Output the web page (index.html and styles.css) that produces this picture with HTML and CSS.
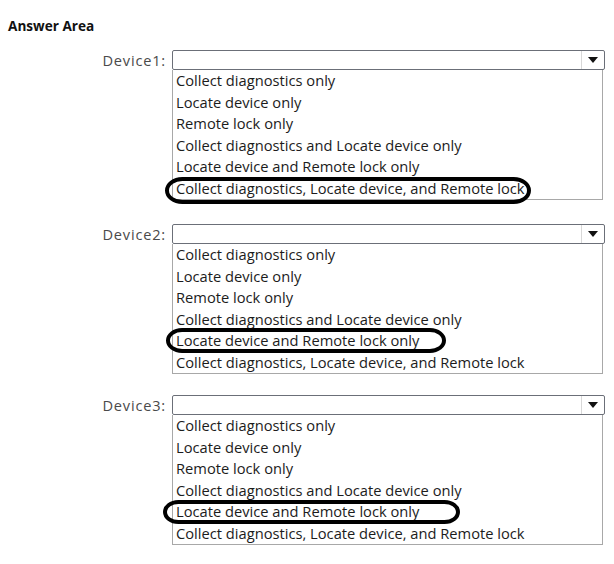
FILE: index.html
```html
<!DOCTYPE html>
<html>
<head>
<meta charset="utf-8">
<link rel="stylesheet" href="styles.css">
</head>
<body>
<div class="page">
  <h1 class="title">Answer Area</h1>

  <div class="device device-first">
    <div class="label">Device1:</div>
    <div class="control">
      <div class="select"><span class="arrow"><svg width="10" height="6" viewBox="0 0 10 6"><path d="M0 0H10L5 6Z" fill="#111"/></svg></span></div>
      <ul class="list">
        <li>Collect diagnostics only</li>
        <li>Locate device only</li>
        <li>Remote lock only</li>
        <li>Collect diagnostics and Locate device only</li>
        <li>Locate device and Remote lock only</li>
        <li class="picked"><span class="ring ring1"></span>Collect diagnostics, Locate device, and Remote lock</li>
      </ul>
    </div>
  </div>

  <div class="device">
    <div class="label">Device2:</div>
    <div class="control">
      <div class="select"><span class="arrow"><svg width="10" height="6" viewBox="0 0 10 6"><path d="M0 0H10L5 6Z" fill="#111"/></svg></span></div>
      <ul class="list">
        <li>Collect diagnostics only</li>
        <li>Locate device only</li>
        <li>Remote lock only</li>
        <li>Collect diagnostics and Locate device only</li>
        <li class="picked"><span class="ring ring2"></span>Locate device and Remote lock only</li>
        <li>Collect diagnostics, Locate device, and Remote lock</li>
      </ul>
    </div>
  </div>

  <div class="device">
    <div class="label">Device3:</div>
    <div class="control">
      <div class="select"><span class="arrow"><svg width="10" height="6" viewBox="0 0 10 6"><path d="M0 0H10L5 6Z" fill="#111"/></svg></span></div>
      <ul class="list">
        <li>Collect diagnostics only</li>
        <li>Locate device only</li>
        <li>Remote lock only</li>
        <li>Collect diagnostics and Locate device only</li>
        <li class="picked"><span class="ring ring3"></span>Locate device and Remote lock only</li>
        <li>Collect diagnostics, Locate device, and Remote lock</li>
      </ul>
    </div>
  </div>
</div>
</body>
</html>
```

FILE: styles.css
```css
html, body {
  margin: 0;
  padding: 0;
  background: #ffffff;
}

.page {
  padding: 17px 0 0 8px;
  font-family: "Open Sans", "Noto Sans", sans-serif;
  color: #1a1a1a;
}

.title {
  margin: 0 0 16px 0;
  font-size: 13.6px;
  font-weight: 700;
  line-height: 17px;
  color: #111;
}

.device {
  display: flex;
  align-items: flex-start;
  margin-bottom: 21px;
}

.device-first {
  margin-bottom: 24px;
}

.label {
  width: 158px;
  text-align: right;
  padding-right: 6px;
  font-size: 14.6px;
  line-height: 20px;
  letter-spacing: 0.8px;
  color: #4a4a4a;
}

.control {
  display: flex;
  flex-direction: column;
  width: 433px;
}

.select {
  height: 18px;
  border: 1px solid #6b6f78;
  border-radius: 2px;
  display: flex;
  justify-content: flex-end;
  background: #fff;
}

.arrow {
  width: 22px;
  border-left: 1px solid #d8d8d8;
  display: flex;
  align-items: center;
  justify-content: center;
}

.list {
  list-style: none;
  margin: 0;
  padding: 0;
  width: 429px;
  border: 1px solid #a8a8a8;
  border-top: none;
}

.list li {
  position: relative;
  height: 21.5px;
  line-height: 21.5px;
  padding-left: 3px;
  font-size: 14.7px;
  color: #1c1c1c;
  white-space: nowrap;
}

.ring {
  position: absolute;
  border: 4.5px solid #000;
  border-radius: 18px / 14px;
  pointer-events: none;
}

.ring1 {
  left: -8px;
  top: -1px;
  width: 358px;
  height: 19px;
}

.ring2 {
  left: -7px;
  top: -2px;
  width: 272px;
  height: 17px;
}

.ring3 {
  left: -10px;
  top: -1px;
  width: 289px;
  height: 16px;
}
```
